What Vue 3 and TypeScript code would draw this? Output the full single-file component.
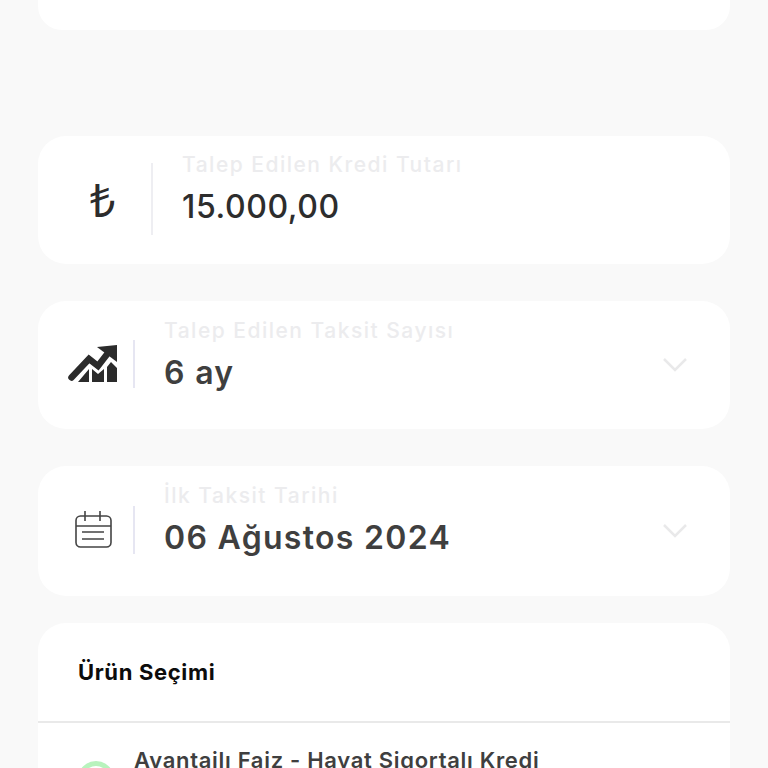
<script setup lang="ts">
interface Field {
  label: string
  value: string
  kind: 'lira' | 'chart' | 'calendar'
  select: boolean
}

const fields: Field[] = [
  { label: 'Talep Edilen Kredi Tutarı', value: '15.000,00', kind: 'lira', select: false },
  { label: 'Talep Edilen Taksit Sayısı', value: '6 ay', kind: 'chart', select: true },
  { label: 'İlk Taksit Tarihi', value: '06 Ağustos 2024', kind: 'calendar', select: true },
]
</script>

<template>
  <main class="page">
    <div class="top-card"></div>

    <section
      v-for="f in fields"
      :key="f.label"
      class="card field"
      :class="{ 'field-wide': f.kind === 'lira', 'field-last': f.kind === 'calendar' }"
    >
      <div class="icon-box">
        <span v-if="f.kind === 'lira'" class="lira">₺</span>
        <svg v-else-if="f.kind === 'chart'" width="50" height="40" viewBox="0 0 50 40">
          <path d="M3.5 33.5 L21 15 L30 22 L40 9" fill="none" stroke="#2b2b2b" stroke-width="6.5" stroke-linecap="round" stroke-linejoin="miter" />
          <path d="M29 3 L49 1 L49 18 Z" fill="#2b2b2b" />
          <path d="M10 38 L21 25 L21 38 Z M24 38 L24 25 L30 30 L36 25 L36 38 Z M39 38 L39 23 L43 18 L49 24 L49 38 Z" fill="#2b2b2b" />
        </svg>
        <svg v-else width="38" height="38" viewBox="0 0 38 38" fill="none" stroke="#444" stroke-width="1.6">
          <rect x="2" y="5" width="35" height="31" rx="4.5" />
          <path d="M2 15 H37 M11 0 V10 M26 0 V10 M8 21 H30 M8 28 H30" />
        </svg>
      </div>
      <div class="divider"></div>
      <div class="text">
        <span class="label">{{ f.label }}</span>
        <span class="value" :class="{ strong: f.kind !== 'lira' }">{{ f.value }}</span>
      </div>
      <svg v-if="f.select" class="chevron" width="26" height="16" viewBox="0 0 26 16" fill="none">
        <path d="M2 2 L13 13 L24 2" stroke="#e9e9ea" stroke-width="2.5" />
      </svg>
    </section>

    <section class="card product">
      <h2 class="title">Ürün Seçimi</h2>
      <div class="row">
        <span class="radio"></span>
        <span class="row-text">Avantajlı Faiz - Hayat Sigortalı Kredi</span>
      </div>
    </section>
  </main>
</template>

<style scoped>
.page {
  width: 768px;
  height: 768px;
  overflow: hidden;
  box-sizing: border-box;
  background: #f9f9f9;
  padding: 0 38px;
  display: flex;
  flex-direction: column;
  font-family: Inter, "Noto Sans", sans-serif;
}
.top-card {
  flex: none;
  height: 30px;
  background: #fff;
  border-radius: 0 0 24px 24px;
  margin-bottom: 106px;
}
.card {
  flex: none;
  background: #fff;
  border-radius: 28px;
}
.field {
  height: 128px;
  margin-bottom: 37px;
  display: flex;
  align-items: center;
  padding-right: 42px;
}
.field-last {
  height: 130px;
  margin-bottom: 27px;
}
.icon-box {
  width: 95px;
  flex: none;
  display: flex;
  justify-content: center;
  align-items: center;
  padding-left: 14px;
  box-sizing: border-box;
  margin-top: -2px;
}
.field-wide .icon-box {
  width: 113px;
  padding-left: 16px;
}
.lira {
  font-family: "Noto Sans", sans-serif;
  font-size: 45px;
  color: #2c2c2c;
  line-height: 1;
}
.divider {
  flex: none;
  width: 2px;
  height: 48px;
  background: #e6e6f2;
  margin-top: -2px;
}
.field-wide .divider {
  height: 72px;
  background: #eeeef2;
}
.text {
  flex: 1;
  display: flex;
  flex-direction: column;
  align-items: flex-start;
  padding-left: 29px;
  margin-top: -20px;
}
.field-wide .text,
.field-last .text {
  margin-top: -22px;
}
.label {
  font-size: 21px;
  line-height: 26px;
  font-weight: 500;
  color: #ececee;
  letter-spacing: 1.5px;
}
.value {
  font-size: 32px;
  line-height: 40px;
  font-weight: 500;
  color: #2d2d2d;
  margin-top: 9px;
  letter-spacing: 0.6px;
}
.value.strong {
  font-weight: 600;
  color: #3f3f3f;
  letter-spacing: 1.3px;
}
.chevron {
  flex: none;
}
.product {
  height: 300px;
}
.title {
  margin: 0;
  height: 100px;
  box-sizing: border-box;
  padding: 36px 0 0 40px;
  font-size: 22px;
  line-height: 26px;
  font-weight: 700;
  letter-spacing: 0.65px;
  color: #0c0c0c;
  border-bottom: 2px solid #e9e9e9;
}
.row {
  display: flex;
  align-items: flex-start;
  padding: 24px 0 0 40px;
}
.radio {
  flex: none;
  width: 26px;
  height: 26px;
  margin-top: 14px;
  border: 5px solid #b8f3bd;
  border-radius: 50%;
}
.row-text {
  margin-left: 20px;
  font-size: 22px;
  line-height: 26px;
  font-weight: 600;
  letter-spacing: 0.7px;
  color: #3f3f3f;
}
</style>
